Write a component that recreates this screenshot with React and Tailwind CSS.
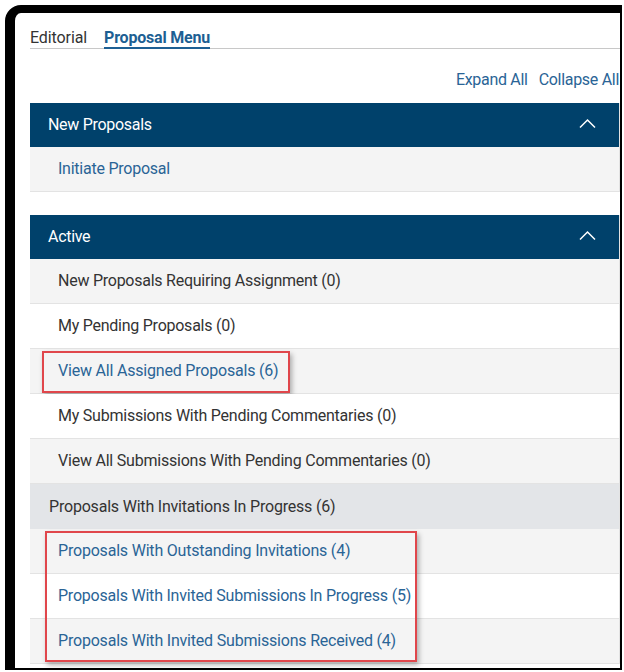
import React from "react";

// letter spacing per row, tuned to the reference's measured text widths
const activeRows = [
  { label: "New Proposals Requiring Assignment (0)", tone: "text", bg: "bg-[#f4f4f4]", track: "tracking-[-0.25px]" },
  { label: "My Pending Proposals (0)", tone: "text", bg: "bg-white", track: "tracking-[-0.25px]" },
  { label: "View All Assigned Proposals (6)", tone: "link", bg: "bg-[#f4f4f4]", track: "tracking-[-0.2px]", boxed: true },
  { label: "My Submissions With Pending Commentaries (0)", tone: "text", bg: "bg-white", track: "tracking-[-0.23px]" },
  { label: "View All Submissions With Pending Commentaries (0)", tone: "text", bg: "bg-[#f4f4f4]", track: "tracking-[-0.22px]" },
];

const invitationRows = [
  { label: "Proposals With Outstanding Invitations (4)", bg: "bg-[#f4f4f4]", track: "tracking-[-0.2px]" },
  { label: "Proposals With Invited Submissions In Progress (5)", bg: "bg-white", track: "tracking-[-0.22px]" },
  { label: "Proposals With Invited Submissions Received (4)", bg: "bg-[#f4f4f4]", track: "tracking-[-0.2px]" },
];

const Chevron = () => (
  <svg width="19" height="11" viewBox="0 0 19 11" fill="none" className="mr-[22px] -mt-[4px]">
    <polyline points="2,9.5 9.5,2 17,9.5" stroke="white" strokeWidth="1.5" />
  </svg>
);

const SectionHeader = ({ title }) => (
  <div className="flex h-[44px] items-center justify-between bg-[#00416b] pl-[18px] text-[16px] tracking-[-0.3px] text-white">
    <span>{title}</span>
    <Chevron />
  </div>
);

const Row = ({ children, bg }) => (
  <div className={`relative flex h-[45px] items-center border-b border-[#e3e3e3] pl-[28px] text-[16px] ${bg}`}>
    {children}
  </div>
);

const App = () => {
  return (
    <div
      className="h-[672px] w-[624px] overflow-hidden bg-white pl-[5px] pt-[5px]"
      style={{ fontFamily: "Roboto, 'Liberation Sans', sans-serif" }}
    >
      <div className="h-[665px] w-[617px] overflow-hidden rounded-tl-[16px] border-b-2 border-l-[10px] border-r-2 border-t-[8px] border-black bg-white pl-[15px]">
        <div className="mt-[15px] flex border-b border-[#c8c8c8] text-[16px] leading-[19px]">
          <span className="text-[#333] tracking-[-0.1px]">Editorial</span>
          <span className="-mb-px ml-[17px] border-b-2 border-[#1d5f93] font-bold text-[#1d5f93] tracking-[-0.2px]">
            Proposal Menu
          </span>
        </div>

        <div className="mt-[19px] flex justify-end gap-[11px] pr-[1px] text-[16px] leading-[24px] tracking-[-0.3px] text-[#2a6496]">
          <span>Expand All</span>
          <span>Collapse All</span>
        </div>

        <div className="mt-[11px] border-r border-[#e3e3e3]">
          <SectionHeader title="New Proposals" />
          <Row bg="bg-[#f4f4f4]">
            <span className="tracking-[-0.24px] text-[#2a6496]">Initiate Proposal</span>
          </Row>
        </div>

        <div className="mt-[23px] border-r border-[#e3e3e3]">
          <SectionHeader title="Active" />
          {activeRows.map((row) => (
            <Row key={row.label} bg={row.bg}>
              <span className={`${row.track} ${row.tone === "link" ? "text-[#2a6496]" : "text-[#333]"}`}>
                {row.label}
              </span>
              {row.boxed && (
                <div className="pointer-events-none absolute left-[12px] top-[2px] h-[42px] w-[248px] border-2 border-[#e0464b] shadow-[2px_3px_5px_rgba(0,0,0,0.3)]" />
              )}
            </Row>
          ))}
          <div className="flex h-[45px] items-center bg-[#e3e5e8] pl-[19px] text-[16px] tracking-[-0.2px] text-[#333]">
            Proposals With Invitations In Progress (6)
          </div>
          <div className="relative">
            {invitationRows.map((row) => (
              <Row key={row.label} bg={row.bg}>
                <span className={`${row.track} text-[#2a6496]`}>{row.label}</span>
              </Row>
            ))}
            <div className="pointer-events-none absolute left-[15px] top-[2px] h-[131px] w-[372px] border-2 border-[#e0464b] shadow-[2px_3px_5px_rgba(0,0,0,0.3)]" />
          </div>
        </div>
      </div>
    </div>
  );
};

export default App;
